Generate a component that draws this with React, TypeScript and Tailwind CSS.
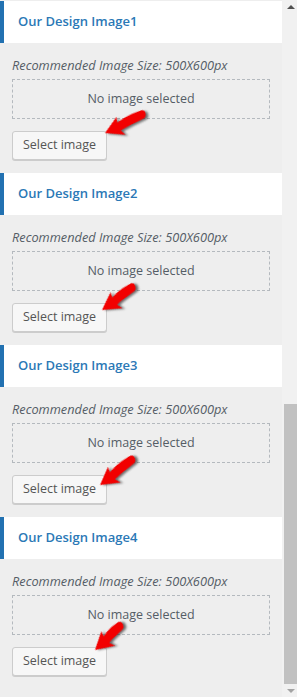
const sections = [
    { title: "Our Design Image1", arrow: "left-[105px] top-[121px] rotate-[-24deg]", len: 45 },
    { title: "Our Design Image2", arrow: "left-[102px] top-[126px] rotate-[-34deg]", len: 41 },
    { title: "Our Design Image3", arrow: "left-[100px] top-[129px] rotate-[-36deg]", len: 44 },
    { title: "Our Design Image4", arrow: "left-[95px] top-[122px] rotate-[-41deg]", len: 38 },
];

function RedArrow({ className, len }: { className: string; len: number }) {
    // arrow drawn pointing left, tip at (0,11), rotated around the tip
    const end = len;
    return (
        <svg
            width={len + 4}
            height={22}
            viewBox={`0 0 ${len + 4} 22`}
            className={`absolute origin-[0_11px] drop-shadow-[2px_2px_1px_rgba(0,0,0,0.55)] ${className}`}
        >
            <path
                d={`M0 11 L17 1 L15.5 6.5 Q${end * 0.6} 3.5 ${end - 3} 5 Q${end + 1} 5.5 ${end} 9.5 Q${end - 1} 13.5 ${end - 4} 13.5 Q${end * 0.6} 13.5 15.5 15 L18 21 Z`}
                fill="#f20000"
            />
        </svg>
    );
}

function Section({ title, arrow, len }: { title: string; arrow: string; len: number }) {
    return (
        <div className="relative">
            <div className="h-[42px] bg-white border-l-4 border-[#2271b1] flex items-center pl-[14px]">
                <span className="text-[13px] font-semibold text-[#2b78b6]">{title}</span>
            </div>
            <div className="px-3 pt-[13px] pb-[13px]">
                <div className="text-[12.75px] italic leading-[18px] text-[#555d66]">
                    Recommended Image Size: 500X600px
                </div>
                <div className="mt-[5px] h-10 w-[258px] border border-dashed border-[#b4b9be] flex items-center justify-center text-[12.5px] text-[#555d66]">
                    No image selected
                </div>
                <button className="mt-3 h-[29px] w-[95px] rounded-[3px] border border-[#ccc] bg-[#f7f7f7] shadow-[0_1px_0_#ccc] text-[12.5px] text-[#555]">
                    Select image
                </button>
            </div>
            <RedArrow className={arrow} len={len} />
        </div>
    );
}

export default function App() {
    return (
        <div
            className="flex w-[297px] h-[697px] overflow-hidden bg-[#eee]"
            style={{ fontFamily: '"Open Sans", "Liberation Sans", sans-serif' }}
        >
            <div className="w-[282px] pt-px">
                {sections.map((s) => (
                    <Section key={s.title} {...s} />
                ))}
            </div>
            <div className="w-[15px] bg-[#f1f1f1] flex flex-col">
                <div className="h-[13px] flex items-center justify-center pl-[2px]">
                    <div className="w-0 h-0 border-l-[4px] border-r-[4px] border-b-[4px] border-l-transparent border-r-transparent border-b-[#505050]" />
                </div>
                <div className="flex-1" />
                <div className="ml-[2px] h-[280px] bg-[#c1c1c1]" />
                <div className="h-[13px] flex items-center justify-center pl-[2px]">
                    <div className="w-0 h-0 border-l-[4px] border-r-[4px] border-t-[4px] border-l-transparent border-r-transparent border-t-[#a3a3a3]" />
                </div>
            </div>
        </div>
    );
}
